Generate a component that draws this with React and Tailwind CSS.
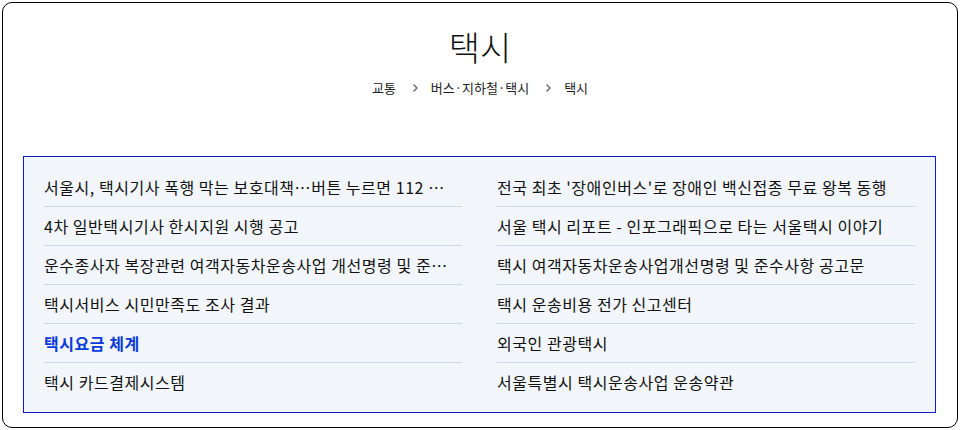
import React from "react";

const left = [
  { t: "서울시, 택시기사 폭행 막는 보호대책…버튼 누르면 112 …" },
  { t: "4차 일반택시기사 한시지원 시행 공고" },
  { t: "운수종사자 복장관련 여객자동차운송사업 개선명령 및 준…" },
  { t: "택시서비스 시민만족도 조사 결과" },
  { t: "택시요금 체계", active: true },
  { t: "택시 카드결제시스템" },
];
const right = [
  { t: "전국 최초 '장애인버스'로 장애인 백신접종 무료 왕복 동행" },
  { t: "서울 택시 리포트 - 인포그래픽으로 타는 서울택시 이야기" },
  { t: "택시 여객자동차운송사업개선명령 및 준수사항 공고문" },
  { t: "택시 운송비용 전가 신고센터" },
  { t: "외국인 관광택시" },
  { t: "서울특별시 택시운송사업 운송약관" },
];

function Chevron() {
  return (
    <svg width="7" height="10" viewBox="0 0 7 10" className="ml-[16px] mr-[12px]">
      <path d="M1.5 1.5 L5 5 L1.5 8.5" fill="none" stroke="#666" strokeWidth="1.4" />
    </svg>
  );
}

function Column({ items }) {
  return (
    <ul className="flex flex-col min-w-0">
      {items.map((it, i) => (
        <li
          key={i}
          className={
            "flex items-center min-w-0 " +
            (i < items.length - 1 ? "h-[39px] border-b border-[#ccd6ef]" : "h-[38px]")
          }
        >
          <span
            className={
              "truncate text-[16px] tracking-[0.55px] leading-[38px] " +
              (it.active ? "font-bold text-[#0b3bd9]" : "text-[#111]")
            }
          >
            {it.t}
          </span>
        </li>
      ))}
    </ul>
  );
}

export default function App() {
  return (
    <div
      className="w-[960px] h-[430px] bg-white pt-[2px] pl-[2px]"
      style={{ fontFamily: "'Noto Sans CJK KR', 'Noto Sans', sans-serif" }}
    >
      <div className="w-[956px] h-[426px] border border-black rounded-[10px] pt-[22px]">
        <h1 className="text-center text-[34px] leading-[44px] text-[#111] font-light">택시</h1>
        <div className="mt-[9px] h-[20px] flex items-center justify-center text-[13px] text-[#222]">
          <span>교통</span>
          <Chevron />
          <span>버스·지하철·택시</span>
          <Chevron />
          <span>택시</span>
        </div>
        <div className="mt-[58px] ml-[20px] w-[913px] h-[257px] border border-[#0a1bd0] bg-[#f2f6fb] px-[20px] pt-[11px] grid grid-cols-2 gap-x-[35px]">
          <Column items={left} />
          <Column items={right} />
        </div>
      </div>
    </div>
  );
}
